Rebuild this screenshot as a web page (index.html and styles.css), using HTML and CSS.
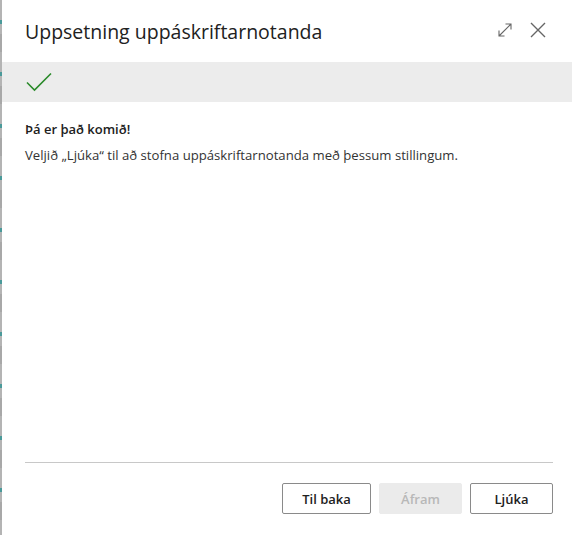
FILE: index.html
```html
<!DOCTYPE html>
<html>
<head>
<meta charset="utf-8">
<link rel="stylesheet" href="styles.css">
</head>
<body>
<div class="page">
  <div class="backdrop"></div>
  <div class="dialog">
    <div class="header">
      <h1 class="title">Uppsetning uppáskriftarnotanda</h1>
      <div class="tools">
        <svg class="icon" width="18" height="18" viewBox="0 0 18 18"><path d="M3 15 L15 3 M9.5 3 H15 V8.5 M3 9.5 V15 H8.5" fill="none" stroke="#666" stroke-width="1.1"/></svg>
        <svg class="icon" width="18" height="18" viewBox="0 0 18 18"><path d="M2 2 L16 16 M16 2 L2 16" fill="none" stroke="#666" stroke-width="1.4"/></svg>
      </div>
    </div>
    <div class="band">
      <svg width="26" height="20" viewBox="0 0 26 20"><path d="M1 10.5 L8.5 18 L25 1.5" fill="none" stroke="#2a8a2a" stroke-width="1.6"/></svg>
    </div>
    <div class="content">
      <p class="lead">Þá er það komið!</p>
      <p class="text">Veljið „Ljúka“ til að stofna uppáskriftarnotanda með þessum stillingum.</p>
    </div>
    <div class="footer">
      <button class="btn wide">Til baka</button>
      <button class="btn disabled">Áfram</button>
      <button class="btn">Ljúka</button>
    </div>
  </div>
</div>
</body>
</html>
```
FILE: styles.css
```css
html, body {
  margin: 0;
  padding: 0;
  background: #fff;
}
.page {
  display: flex;
  width: 573px;
  height: 535px;
  font-family: "Open Sans", "Noto Sans", sans-serif;
  color: #212121;
}
.backdrop {
  width: 2px;
  background: repeating-linear-gradient(180deg, #b4b4b4 0 20px, #4a9a9a 20px 24px, #b4b4b4 24px 34px, #a8a8a8 34px 52px);
}
.dialog {
  flex: 1;
  display: flex;
  flex-direction: column;
  background: #fff;
}
.header {
  height: 62px;
  display: flex;
  align-items: center;
  justify-content: space-between;
  padding: 0 26px 0 23px;
  box-sizing: border-box;
}
.title {
  margin: 0;
  font-size: 19.5px;
  font-weight: 400;
  color: #212121;
}
.tools {
  display: flex;
  gap: 15px;
  align-items: center;
  margin-top: -2px;
}
.icon { display: block; }
.band {
  height: 40px;
  background: #ececec;
  display: flex;
  align-items: center;
  padding-left: 24px;
  margin-right: 1px;
}
.content {
  flex: 1;
  padding: 18px 23px 0;
}
.lead {
  margin: 0;
  font-size: 13px;
  font-weight: 600;
  color: #212121;
}
.text {
  margin: 8px 0 0;
  font-size: 13.15px;
  color: #333;
}
.footer {
  margin: 0 20px 21px 23px;
  border-top: 1px solid #c8c8c8;
  padding-top: 20px;
  display: flex;
  justify-content: flex-end;
  gap: 8px;
}
.btn {
  width: 83px;
  height: 31px;
  border: 1px solid #8a8a8a;
  border-radius: 2px;
  background: #fff;
  font-family: "Open Sans", "Noto Sans", sans-serif;
  font-size: 13px;
  font-weight: 600;
  color: #212121;
  padding: 0;
}
.btn.wide { width: 89px; }
.btn.disabled {
  background: #ebebeb;
  border-color: #ebebeb;
  color: #b8b8b8;
}
```
